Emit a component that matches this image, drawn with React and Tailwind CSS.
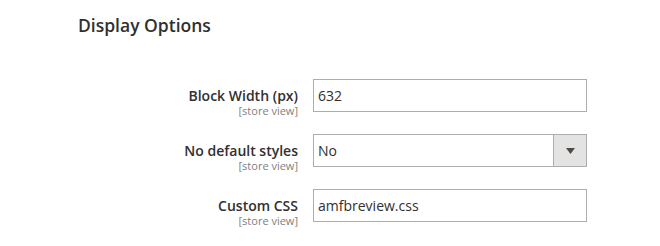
import React from "react";

const rows = [
  { label: "Block Width (px)", value: "632", type: "input" },
  { label: "No default styles", value: "No", type: "select" },
  { label: "Custom CSS", value: "amfbreview.css", type: "input" },
];

function Field({ label, value, type }) {
  return (
    <div className="flex items-start h-[55px]">
      <div className="w-[298px] pt-[8px] text-right">
        <div className="text-[14px] leading-[18px] font-semibold text-[#303030]">{label}</div>
        <div className="text-[11px] leading-[12px] text-[#808080]">[store view]</div>
      </div>
      <div className="ml-[15px] w-[274px] h-[33px] border border-[#adadad] bg-white flex items-center">
        <span className="flex-1 pl-1 text-[14px] text-[#303030]">{value}</span>
        {type === "select" && (
          <div className="w-[33px] h-full bg-[#e3e3e3] border-l border-[#adadad] flex items-center justify-center">
            <svg width="9" height="6" viewBox="0 0 9 6">
              <path d="M0 0h9L4.5 6z" fill="#514943" />
            </svg>
          </div>
        )}
      </div>
    </div>
  );
}

export default function App() {
  return (
    <div className="w-[660px] h-[246px] bg-white overflow-hidden font-['Open_Sans',sans-serif]">
      <h2 className="pt-[13px] pl-[78px] text-[17.5px] leading-[24px] font-semibold text-[#303030]">
        Display Options
      </h2>
      <div className="mt-[42px]">
        {rows.map((r) => (
          <Field key={r.label} {...r} />
        ))}
      </div>
    </div>
  );
}
